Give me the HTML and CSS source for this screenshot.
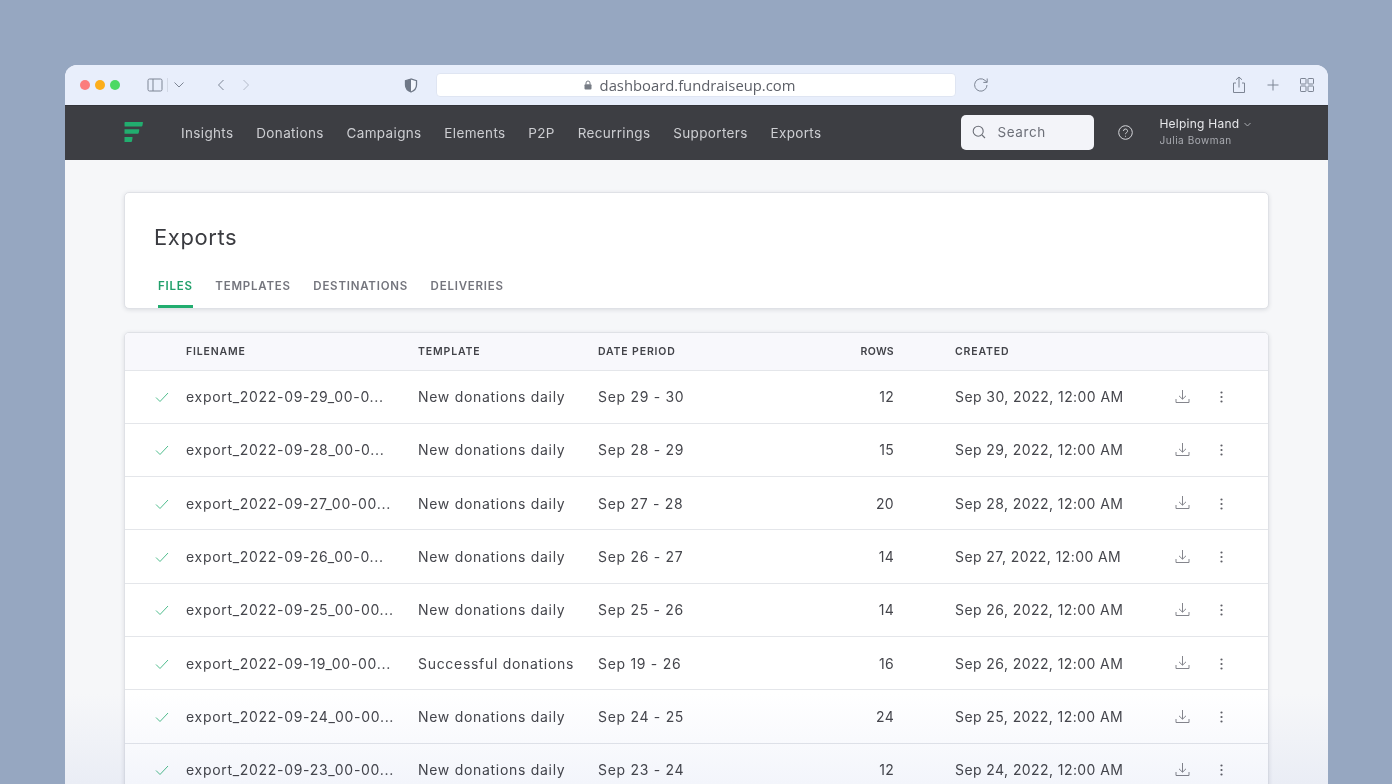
FILE: index.html
```html
<!DOCTYPE html>
<html lang="en">
<head>
  <meta charset="UTF-8">
  <title>Exports</title>
  <link rel="stylesheet" href="styles.css">
</head>
<body>

  <div class="window">

    <!-- Browser toolbar -->
    <div class="chrome">
      <div class="lights">
        <span class="light red"></span>
        <span class="light yellow"></span>
        <span class="light green"></span>
      </div>
      <svg class="ico sidebar-ico" width="16" height="14" viewBox="0 0 16 14"><rect x="1" y="1" width="14" height="12" rx="1.5"/><path d="M6 1v12"/></svg>
      <span class="divider"></span>
      <svg class="ico chevron-ico" width="12" height="8" viewBox="0 0 12 8"><path d="M1.5 1.5 6 6l4.500-4.500"/></svg>
      <svg class="ico back-ico" width="8" height="12" viewBox="0 0 8 12"><path d="M6.500 1 1.500 6l5 5"/></svg>
      <svg class="ico fwd-ico" width="8" height="12" viewBox="0 0 8 12"><path d="M1.500 1l5 5-5 5"/></svg>
      <svg class="shield-ico" width="14" height="15" viewBox="0 0 14 15"><path d="M7 1 1.500 2.700v4.300c0 3.300 2.300 5.700 5.500 7 3.200-1.300 5.500-3.700 5.500-7V2.700z" fill="#f3f6fd" stroke="#6f7887" stroke-width="1.300"/><path d="M7 1 1.500 2.700v4.300c0 3.300 2.300 5.700 5.500 7z" fill="#6f7887"/></svg>
      <div class="address">
        <svg width="8" height="10" viewBox="0 0 8 10"><path d="M2 4.500V3a2 2 0 0 1 4 0v1.500" fill="none" stroke="#777c85" stroke-width="1"/><rect x="0.500" y="4.200" width="7" height="5.300" rx="1" fill="#777c85"/></svg>
        <span>dashboard.fundraiseup.com</span>
      </div>
      <svg class="ico reload-ico" width="16" height="16" viewBox="0 0 16 16"><path d="M14 8a6.200 6.200 0 1 1-2-4.600L14 5.200"/><path d="M14.200 1.500v3.900h-3.900"/></svg>
      <div class="chrome-right">
        <svg class="ico" width="14" height="18" viewBox="0 0 14 18"><path d="M4 7H1.500v9.500h11V7H10"/><path d="M7 11.500V1M4 3.800 7 1l3 2.800"/></svg>
        <svg class="ico" width="12" height="12" viewBox="0 0 12 12"><path d="M6 .5v11M.5 6h11"/></svg>
        <svg class="ico" width="14" height="14" viewBox="0 0 14 14"><rect x=".5" y=".5" width="5.500" height="5.500" rx=".6"/><rect x="8" y=".5" width="5.500" height="5.500" rx=".6"/><rect x=".5" y="8" width="5.500" height="5.500" rx=".6"/><rect x="8" y="8" width="5.500" height="5.500" rx=".6"/></svg>
      </div>
    </div>

    <!-- App nav -->
    <div class="topnav">
      <svg class="logo" width="20" height="21" viewBox="0 0 20 21"><path d="M1.600 0H18.500a.5.5 0 0 1 .5.6l-.6 3.200a1 1 0 0 1-1 .7H.6L.5 1A1 1 0 0 1 1.600 0z" fill="#22ad6f"/><path d="M.5 7.300h14.300a.5.5 0 0 1 .5.6l-.6 3.100a1 1 0 0 1-1 .7H.5z" fill="#22ad6f"/><path d="M.5 15h7.600a.5.5 0 0 1 .5.6l-.6 3.700a1 1 0 0 1-1 .7H.5z" fill="#22ad6f"/></svg>
      <nav class="links">
        <a href="#">Insights</a>
        <a href="#">Donations</a>
        <a href="#">Campaigns</a>
        <a href="#">Elements</a>
        <a href="#">P2P</a>
        <a href="#">Recurrings</a>
        <a href="#">Supporters</a>
        <a href="#">Exports</a>
      </nav>
      <div class="search">
        <svg width="14" height="14" viewBox="0 0 14 14" fill="none" stroke="#6c6f78" stroke-width="1.100"><circle cx="6.200" cy="6.200" r="5"/><path d="m10 10 3 3"/></svg>
        <span>Search</span>
      </div>
      <svg class="help" width="15" height="15" viewBox="0 0 15 15" fill="none" stroke="#d6d7db" stroke-width="1"><circle cx="7.500" cy="7.500" r="6.800"/><path d="M5.500 6a2 2 0 1 1 3 1.700c-.7.400-1 .8-1 1.500"/><path d="M7.500 10.800v.9"/></svg>
      <div class="account">
        <div class="org">Helping Hand
          <svg width="7" height="5" viewBox="0 0 7 5" fill="none" stroke="#a9abb1" stroke-width="1"><path d="M.5 1 3.500 4l3-3"/></svg>
        </div>
        <div class="person">Julia Bowman</div>
      </div>
    </div>

    <div class="content">
      <!-- Page header -->
      <div class="card page-head">
        <h1>Exports</h1>
        <div class="tabs">
          <a href="#" class="tab active">FILES</a>
          <a href="#" class="tab">TEMPLATES</a>
          <a href="#" class="tab">DESTINATIONS</a>
          <a href="#" class="tab">DELIVERIES</a>
        </div>
      </div>

      <!-- Files table -->
      <div class="card files">
        <table>
          <colgroup>
            <col class="c-status"><col class="c-file"><col class="c-template"><col class="c-date"><col class="c-rows"><col class="c-created"><col class="c-action"><col class="c-action"><col>
          </colgroup>
          <thead>
            <tr>
              <th></th>
              <th>FILENAME</th>
              <th>TEMPLATE</th>
              <th>DATE PERIOD</th>
              <th class="num">ROWS</th>
              <th class="created">CREATED</th>
              <th></th><th></th><th></th>
            </tr>
          </thead>
          <tbody>
            <tr>
              <td class="act status"><svg class="check" width="14" height="11" viewBox="0 0 14 11"><path d="M1 5.500 5 9.500 13 1"/></svg></td>
              <td>export_2022-09-29_00-0...</td>
              <td>New donations daily</td>
              <td>Sep 29 - 30</td>
              <td class="num">12</td>
              <td class="created">Sep 30, 2022, 12:00 AM</td>
              <td class="act"><svg class="dl" width="15" height="15" viewBox="0 0 15 15"><path d="M7.500 1v9M4 6.800l3.500 3.400L11 6.800M1 10v3.500h13V10"/></svg></td>
              <td class="act"><svg class="dots" width="3" height="12" viewBox="0 0 3 12"><circle cx="1.500" cy="1.500" r="1.100"/><circle cx="1.500" cy="6" r="1.100"/><circle cx="1.500" cy="10.500" r="1.100"/></svg></td>
              <td></td>
            </tr>
            <tr>
              <td class="act status"><svg class="check" width="14" height="11" viewBox="0 0 14 11"><path d="M1 5.500 5 9.500 13 1"/></svg></td>
              <td>export_2022-09-28_00-0...</td>
              <td>New donations daily</td>
              <td>Sep 28 - 29</td>
              <td class="num">15</td>
              <td class="created">Sep 29, 2022, 12:00 AM</td>
              <td class="act"><svg class="dl" width="15" height="15" viewBox="0 0 15 15"><path d="M7.500 1v9M4 6.800l3.500 3.400L11 6.800M1 10v3.500h13V10"/></svg></td>
              <td class="act"><svg class="dots" width="3" height="12" viewBox="0 0 3 12"><circle cx="1.500" cy="1.500" r="1.100"/><circle cx="1.500" cy="6" r="1.100"/><circle cx="1.500" cy="10.500" r="1.100"/></svg></td>
              <td></td>
            </tr>
            <tr>
              <td class="act status"><svg class="check" width="14" height="11" viewBox="0 0 14 11"><path d="M1 5.500 5 9.500 13 1"/></svg></td>
              <td>export_2022-09-27_00-00...</td>
              <td>New donations daily</td>
              <td>Sep 27 - 28</td>
              <td class="num">20</td>
              <td class="created">Sep 28, 2022, 12:00 AM</td>
              <td class="act"><svg class="dl" width="15" height="15" viewBox="0 0 15 15"><path d="M7.500 1v9M4 6.800l3.500 3.400L11 6.800M1 10v3.500h13V10"/></svg></td>
              <td class="act"><svg class="dots" width="3" height="12" viewBox="0 0 3 12"><circle cx="1.500" cy="1.500" r="1.100"/><circle cx="1.500" cy="6" r="1.100"/><circle cx="1.500" cy="10.500" r="1.100"/></svg></td>
              <td></td>
            </tr>
            <tr>
              <td class="act status"><svg class="check" width="14" height="11" viewBox="0 0 14 11"><path d="M1 5.500 5 9.500 13 1"/></svg></td>
              <td>export_2022-09-26_00-0...</td>
              <td>New donations daily</td>
              <td>Sep 26 - 27</td>
              <td class="num">14</td>
              <td class="created">Sep 27, 2022, 12:00 AM</td>
              <td class="act"><svg class="dl" width="15" height="15" viewBox="0 0 15 15"><path d="M7.500 1v9M4 6.800l3.500 3.400L11 6.800M1 10v3.500h13V10"/></svg></td>
              <td class="act"><svg class="dots" width="3" height="12" viewBox="0 0 3 12"><circle cx="1.500" cy="1.500" r="1.100"/><circle cx="1.500" cy="6" r="1.100"/><circle cx="1.500" cy="10.500" r="1.100"/></svg></td>
              <td></td>
            </tr>
            <tr>
              <td class="act status"><svg class="check" width="14" height="11" viewBox="0 0 14 11"><path d="M1 5.500 5 9.500 13 1"/></svg></td>
              <td>export_2022-09-25_00-00...</td>
              <td>New donations daily</td>
              <td>Sep 25 - 26</td>
              <td class="num">14</td>
              <td class="created">Sep 26, 2022, 12:00 AM</td>
              <td class="act"><svg class="dl" width="15" height="15" viewBox="0 0 15 15"><path d="M7.500 1v9M4 6.800l3.500 3.400L11 6.800M1 10v3.500h13V10"/></svg></td>
              <td class="act"><svg class="dots" width="3" height="12" viewBox="0 0 3 12"><circle cx="1.500" cy="1.500" r="1.100"/><circle cx="1.500" cy="6" r="1.100"/><circle cx="1.500" cy="10.500" r="1.100"/></svg></td>
              <td></td>
            </tr>
            <tr>
              <td class="act status"><svg class="check" width="14" height="11" viewBox="0 0 14 11"><path d="M1 5.500 5 9.500 13 1"/></svg></td>
              <td>export_2022-09-19_00-00...</td>
              <td>Successful donations</td>
              <td>Sep 19 - 26</td>
              <td class="num">16</td>
              <td class="created">Sep 26, 2022, 12:00 AM</td>
              <td class="act"><svg class="dl" width="15" height="15" viewBox="0 0 15 15"><path d="M7.500 1v9M4 6.800l3.500 3.400L11 6.800M1 10v3.500h13V10"/></svg></td>
              <td class="act"><svg class="dots" width="3" height="12" viewBox="0 0 3 12"><circle cx="1.500" cy="1.500" r="1.100"/><circle cx="1.500" cy="6" r="1.100"/><circle cx="1.500" cy="10.500" r="1.100"/></svg></td>
              <td></td>
            </tr>
            <tr>
              <td class="act status"><svg class="check" width="14" height="11" viewBox="0 0 14 11"><path d="M1 5.500 5 9.500 13 1"/></svg></td>
              <td>export_2022-09-24_00-00...</td>
              <td>New donations daily</td>
              <td>Sep 24 - 25</td>
              <td class="num">24</td>
              <td class="created">Sep 25, 2022, 12:00 AM</td>
              <td class="act"><svg class="dl" width="15" height="15" viewBox="0 0 15 15"><path d="M7.500 1v9M4 6.800l3.500 3.400L11 6.800M1 10v3.500h13V10"/></svg></td>
              <td class="act"><svg class="dots" width="3" height="12" viewBox="0 0 3 12"><circle cx="1.500" cy="1.500" r="1.100"/><circle cx="1.500" cy="6" r="1.100"/><circle cx="1.500" cy="10.500" r="1.100"/></svg></td>
              <td></td>
            </tr>
            <tr>
              <td class="act status"><svg class="check" width="14" height="11" viewBox="0 0 14 11"><path d="M1 5.500 5 9.500 13 1"/></svg></td>
              <td>export_2022-09-23_00-00...</td>
              <td>New donations daily</td>
              <td>Sep 23 - 24</td>
              <td class="num">12</td>
              <td class="created">Sep 24, 2022, 12:00 AM</td>
              <td class="act"><svg class="dl" width="15" height="15" viewBox="0 0 15 15"><path d="M7.500 1v9M4 6.800l3.500 3.400L11 6.800M1 10v3.500h13V10"/></svg></td>
              <td class="act"><svg class="dots" width="3" height="12" viewBox="0 0 3 12"><circle cx="1.500" cy="1.500" r="1.100"/><circle cx="1.500" cy="6" r="1.100"/><circle cx="1.500" cy="10.500" r="1.100"/></svg></td>
              <td></td>
            </tr>
          </tbody>
        </table>
      </div>
    </div>

    <!-- Pale fade over the bottom of the window -->
    <div class="fade"></div>
  </div>

</body>
</html>
```

FILE: styles.css
```css
* { box-sizing: border-box; margin: 0; padding: 0; }
html, body { height: 100%; overflow: hidden; }
body { background: #96a7c1; font-family: Inter, "Noto Sans", sans-serif; padding: 65px 64px 0 65px; }
a { text-decoration: none; }

.window { position: relative; height: 719px; background: #f6f7f9; border-radius: 12px 12px 0 0; overflow: hidden; }

/* Browser toolbar */
.chrome { height: 40px; background: #e8eefb; display: flex; align-items: center; padding-left: 15px; }
.lights { display: flex; gap: 5px; width: 67px; }
.light { width: 10px; height: 10px; border-radius: 50%; }
.red { background: #fb7d7d; }
.yellow { background: #fcae1b; }
.green { background: #4cd964; }
.ico { fill: none; stroke: #7d8594; stroke-width: 1; flex: none; }
.divider { width: 1px; height: 14px; background: #d3d9e6; margin: 0 5px 0 4px; }
.chevron-ico { margin-right: 32px; }
.fwd-ico { margin-left: 17px; opacity: .5; }
.shield-ico { margin-left: 154px; flex: none; }
.address {
  width: 520px; height: 24px; margin-left: 18px; padding: 0 13px 1px 0; background: #fff; border: 1px solid #dfe5f2; border-radius: 4px;
  display: flex; align-items: center; justify-content: center; gap: 8px;
  color: #5d6068; font-size: 14.800px; font-family: "Open Sans", sans-serif;
}
.reload-ico { margin-left: 17px; }
.chrome-right { margin-left: auto; margin-right: 14px; display: flex; align-items: center; gap: 21px; }

/* App nav */
.topnav { height: 55px; background: #3d3e43; display: flex; align-items: center; padding-left: 59px; border-top: 1px solid #33343a; }
.logo { flex: none; margin-top: -2px; }
.links { display: flex; gap: 22.800px; margin-left: 37px; }
.links a { color: #cdced2; font-size: 13.500px; letter-spacing: .35px; }
.search {
  width: 133px; height: 35px; margin: -2px 0 0 140px; background: #f3f4f9; border-radius: 5px;
  display: flex; align-items: center; gap: 11px; padding-left: 11px; color: #6c6f78; font-size: 13.500px; letter-spacing: .6px;
}
.help { margin: -1px 0 0 24px; }
.account { margin-left: 26px; padding-bottom: 4px; }
.org { color: #e6e7ea; font-size: 12px; letter-spacing: .25px; }
.org svg { margin-left: 1px; vertical-align: 1px; }
.person { color: #a9abb1; font-size: 10px; letter-spacing: .55px; margin-top: 3px; }

/* Content */
.content { padding: 32px 59px 0 59px; }
.card { background: #fff; border-radius: 5px; border: 1px solid #dfe1e6; box-shadow: 0 1px 4px rgba(40,45,60,.13); }
.page-head { height: 117px; padding: 29px 29px 0; }
.page-head h1 { font-size: 22px; font-weight: 400; color: #3a3b40; letter-spacing: .6px; line-height: 30px; }
.tabs { display: flex; gap: 22.500px; margin-top: 20px; padding-left: 4px; }
.tab { height: 36px; line-height: 29px; color: #74757d; font-size: 11.500px; font-weight: 600; letter-spacing: .78px; border-bottom: 3px solid transparent; }
.tab.active { color: #22a06b; border-bottom-color: #22ad6f; }

/* Files table */
.files { margin-top: 23px; overflow: hidden; }
table { width: 100%; border-collapse: collapse; table-layout: fixed; }
.c-status { width: 61px; }
.c-file { width: 232px; }
.c-template { width: 180px; }
.c-date { width: 202px; }
.c-rows { width: 94px; }
.c-created { width: 269px; }
.c-action { width: 39px; }
th { height: 37px; background: #f8f8fc; text-align: left; color: #414248; font-size: 10.500px; font-weight: 600; letter-spacing: .85px; border-bottom: 1px solid #e4e6ea; }
td { height: 53.340px; color: #45464c; font-size: 14px; letter-spacing: .7px; border-bottom: 1px solid #e4e6ea; white-space: nowrap; }
.num { text-align: right; letter-spacing: .3px; }
.created { padding-left: 61px; }
td.created { letter-spacing: .42px; }
.act { text-align: center; padding-top: 2px; }
.status { padding-left: 13px; }
.check { fill: none; stroke: #4fbd8d; stroke-width: 1; }
.dl { fill: none; stroke: #84858c; stroke-width: 1; }
.dots { fill: #5d5e65; }

/* multiply keeps the text dark while the white rows tint */
.fade {
  position: absolute; left: 0; right: 0; bottom: 0; height: 90px; pointer-events: none; mix-blend-mode: multiply;
  background: linear-gradient(to bottom, #fff, #f3f5fb);
}
```
